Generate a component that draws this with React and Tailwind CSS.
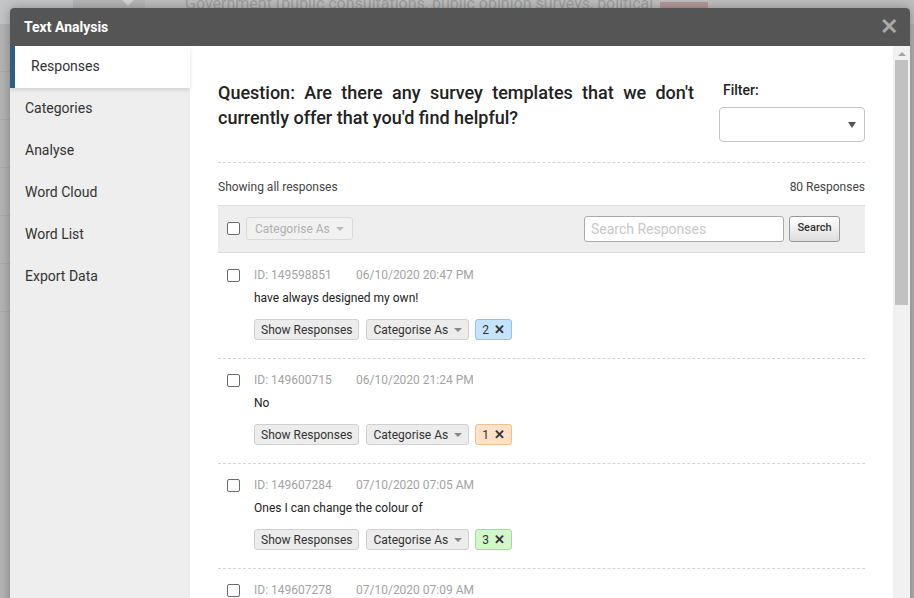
import React from 'react';

const rows = [
    { id: '149598851', date: '06/10/2020 20:47 PM', text: 'have always designed my own!', tag: '2', tagCls: 'bg-[#c5e3fa] border-[#93c4ec]' },
    { id: '149600715', date: '06/10/2020 21:24 PM', text: 'No', tag: '1', tagCls: 'bg-[#fde1c8] border-[#f1c08f]' },
    { id: '149607284', date: '07/10/2020 07:05 AM', text: 'Ones I can change the colour of', tag: '3', tagCls: 'bg-[#d3f6cc] border-[#a3dc97]' },
    { id: '149607278', date: '07/10/2020 07:09 AM', text: 'A template for feedback on online events', tag: '2', tagCls: 'bg-[#c5e3fa] border-[#93c4ec]' },
];

const menu = ['Responses', 'Categories', 'Analyse', 'Word Cloud', 'Word List', 'Export Data'];

const Box = () => (
    <span className="block w-[13px] h-[13px] shrink-0 rounded-[2px] border border-[#6b6b6b] bg-white" />
);

const Caret = ({ cls }) => (
    <span className={`ml-[6px] inline-block w-0 h-0 border-l-[4px] border-r-[4px] border-t-[4px] border-l-transparent border-r-transparent ${cls}`} />
);

const Row = ({ r }) => (
    <div className="flex border-b border-dashed border-[#d6d6d6] pt-[13px] pb-[18px]">
        <div className="w-[36px] pl-[9px] pt-[2px]">
            <Box />
        </div>
        <div className="flex-1">
            <div className="flex text-[12px] leading-[16px] text-[#a3a3a3]">
                <span className="w-[102px]">ID: {r.id}</span>
                <span>{r.date}</span>
            </div>
            <div className="mt-[6px] text-[12px] leading-[18px] text-[#222]">{r.text}</div>
            <div className="mt-[12px] flex items-center gap-[7px] text-[12px] text-[#333]">
                <span className="h-[21px] flex items-center px-[6px] rounded-[3px] border border-[#d0d0d0] bg-[#ececec]">Show Responses</span>
                <span className="h-[21px] flex items-center px-[6px] rounded-[3px] border border-[#d0d0d0] bg-[#ececec]">
                    Categorise As
                    <Caret cls="border-t-[#888]" />
                </span>
                <span className={`-ml-[1px] h-[21px] flex items-center gap-[5px] px-[6px] rounded-[3px] border ${r.tagCls}`}>
                    {r.tag}
                    <span className="text-[13px] font-bold text-[#333]">✕</span>
                </span>
            </div>
        </div>
    </div>
);

export default function App() {
    return (
        <div className="relative w-[914px] h-[598px] overflow-hidden bg-[#b4b4b4]" style={{ fontFamily: 'Roboto, "Liberation Sans", sans-serif' }}>
            {/* page behind the overlay */}
            <div className="flex h-[24px] bg-[#b0b0b0]">
                <div className="w-[73px] bg-[#c3c5c7]" />
                <div className="relative w-[72px] bg-[#b7b7b7]">
                    <span className="absolute left-[49px] top-0 w-0 h-0 border-l-[6px] border-r-[6px] border-t-[6px] border-l-transparent border-r-transparent border-t-[#d4d4d4]" />
                </div>
                <div className="relative flex-1 bg-[#bfbfbf] pl-[40px] text-[16px] leading-[8px] text-[#a0a0a0] overflow-hidden">
                    Government (public consultations, public opinion surveys, political
                    <span className="absolute left-[515px] top-[2px] w-[48px] h-[20px] bg-[#b89a9d]" />
                </div>
            </div>
            <div className="w-[10px]">
                {[0, 1, 2, 3, 4, 5].map((i) => (
                    <div key={i} className="h-[48px] border-b border-[#a9a9a9]" />
                ))}
            </div>

            {/* modal */}
            <div className="absolute left-[10px] top-[8px] w-[900px] h-[620px] rounded-t-[4px] overflow-hidden bg-white shadow-[0_0_12px_rgba(0,0,0,0.3)] flex flex-col">
                <div className="h-[38px] shrink-0 bg-[#555555] flex items-center justify-between pl-[14px] pr-[12px]">
                    <span className="text-[14px] font-bold text-white">Text Analysis</span>
                    <span className="text-[22px] font-bold leading-none text-[#a9a9a9]">✕</span>
                </div>
                <div className="flex flex-1 min-h-0">
                    <div className="w-[180px] shrink-0 bg-[#eeeeee] text-[14px] text-[#333]">
                        {menu.map((m, i) =>
                            i === 0 ? (
                                <div key={m} className="relative z-10 h-[42px] flex items-center pb-[2px] bg-white border-l-[5px] border-[#2d5f86] pl-[16px] shadow-[0_2px_4px_rgba(0,0,0,0.12)]">
                                    {m}
                                </div>
                            ) : (
                                <div key={m} className="h-[42px] flex items-center pb-[2px] pl-[15px]">{m}</div>
                            )
                        )}
                    </div>

                    <div className="flex-1 min-w-0 px-[28px] pt-[34px]">
                        <div className="flex justify-between">
                            <h2 className="w-[476px] text-[18px] leading-[25px] font-medium text-[#222] text-justify">
                                Question: Are there any survey templates that we don't currently offer that you'd find helpful?
                            </h2>
                            <div className="w-[146px] mt-[1px]">
                                <div className="pl-[4px] text-[14px] font-medium text-[#222] leading-[18px]">Filter:</div>
                                <div className="mt-[8px] h-[35px] rounded-[4px] border border-[#c4c4c4] flex items-center justify-end pr-[8px]">
                                    <span className="w-0 h-0 border-l-[4px] border-r-[4px] border-t-[6px] border-l-transparent border-r-transparent border-t-[#555]" />
                                </div>
                            </div>
                        </div>

                        <div className="mt-[20px] border-t border-dashed border-[#d6d6d6]" />

                        <div className="mt-[16px] flex justify-between text-[12px] text-[#444] leading-[16px]">
                            <span>Showing all responses</span>
                            <span>80 Responses</span>
                        </div>

                        <div className="mt-[10px] h-[48px] bg-[#eeeeee] border-y border-[#dcdcdc] flex items-center pb-[1px]">
                            <div className="pl-[9px] pr-[6px]">
                                <Box />
                            </div>
                            <span className="h-[23px] flex items-center px-[8px] rounded-[3px] border border-[#dadada] bg-[#f1f1f1] text-[12px] text-[#b0b0b0]">
                                Categorise As
                                <Caret cls="border-t-[#bbb]" />
                            </span>
                            <div className="ml-auto mr-[25px] flex items-center gap-[5px]">
                                <input
                                    className="w-[200px] h-[26px] rounded-[3px] border border-[#aaa] bg-white px-[6px] text-[14px] outline-none placeholder:text-[#c8c8c8]"
                                    placeholder="Search Responses"
                                />
                                <button className="w-[51px] h-[26px] rounded-[3px] border border-[#999] bg-gradient-to-b from-white to-[#dedede] text-[11px] font-medium text-[#333]">
                                    Search
                                </button>
                            </div>
                        </div>

                        <div className="pt-[1px]">
                            {rows.map((r) => (
                                <Row key={r.id} r={r} />
                            ))}
                        </div>
                    </div>

                    <div className="w-[17px] shrink-0 bg-[#f1f1f1] flex flex-col items-center">
                        <span className="mt-[6px] w-0 h-0 border-l-[4px] border-r-[4px] border-b-[4px] border-l-transparent border-r-transparent border-b-[#a3a3a3]" />
                        <div className="mt-[4px] w-[13px] h-[245px] bg-[#c1c1c1]" />
                    </div>
                </div>
            </div>
        </div>
    );
}
